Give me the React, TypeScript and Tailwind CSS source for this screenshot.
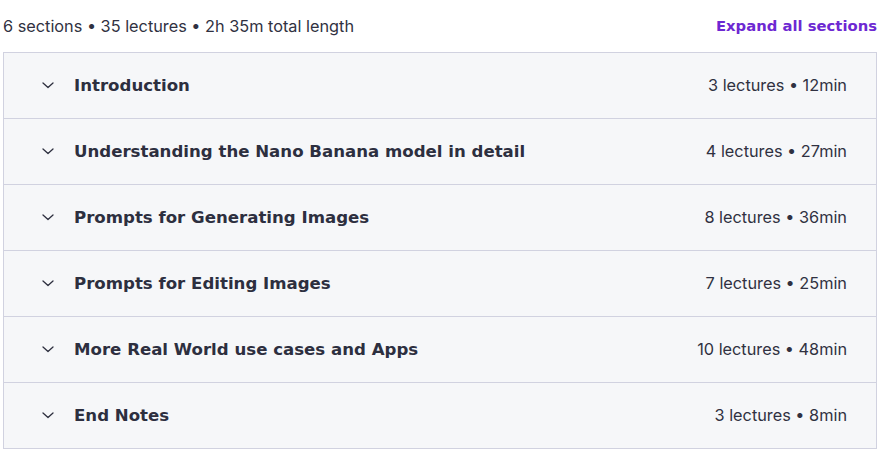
import React from "react";

const sections = [
  { title: "Introduction", meta: "3 lectures • 12min" },
  { title: "Understanding the Nano Banana model in detail", meta: "4 lectures • 27min" },
  { title: "Prompts for Generating Images", meta: "8 lectures • 36min" },
  { title: "Prompts for Editing Images", meta: "7 lectures • 25min" },
  { title: "More Real World use cases and Apps", meta: "10 lectures • 48min" },
  { title: "End Notes", meta: "3 lectures • 8min" },
];

function Chevron() {
  return (
    <svg width="12" height="7" viewBox="0 0 12 7" fill="none" className="shrink-0">
      <path d="M1 1 L6 5.5 L11 1" stroke="#2d2f3f" strokeWidth="1.3" strokeLinecap="round" strokeLinejoin="round" />
    </svg>
  );
}

const boldFont = { fontFamily: "'DejaVu Sans', sans-serif" };

export default function App() {
  return (
    <div className="w-[882px] h-[453px] bg-white" style={{ fontFamily: "Inter, 'Liberation Sans', sans-serif" }}>
      <div className="ml-[3px] w-[874px]">
        <div className="h-[52px] flex items-center justify-between">
          <span className="text-[16.3px] text-[#303141]">6 sections • 35 lectures • 2h 35m total length</span>
          <span className="text-[14.8px] font-bold text-[#6d28d2]" style={boldFont}>Expand all sections</span>
        </div>
        <div className="border border-[#d1d2e0] bg-[#f6f7f9]">
          {sections.map((s, i) => (
            <div
              key={i}
              className={`flex items-center pl-[38px] pr-[29px] ${i < sections.length - 1 ? "h-[66px] border-b border-[#d1d2e0]" : "h-[65px]"}`}
            >
              <Chevron />
              <span className="ml-[20px] mt-[2px] text-[16.6px] font-bold text-[#2d2f3f] flex-1" style={boldFont}>{s.title}</span>
              <span className="text-[16.3px] text-[#303141]">{s.meta}</span>
            </div>
          ))}
        </div>
      </div>
    </div>
  );
}
